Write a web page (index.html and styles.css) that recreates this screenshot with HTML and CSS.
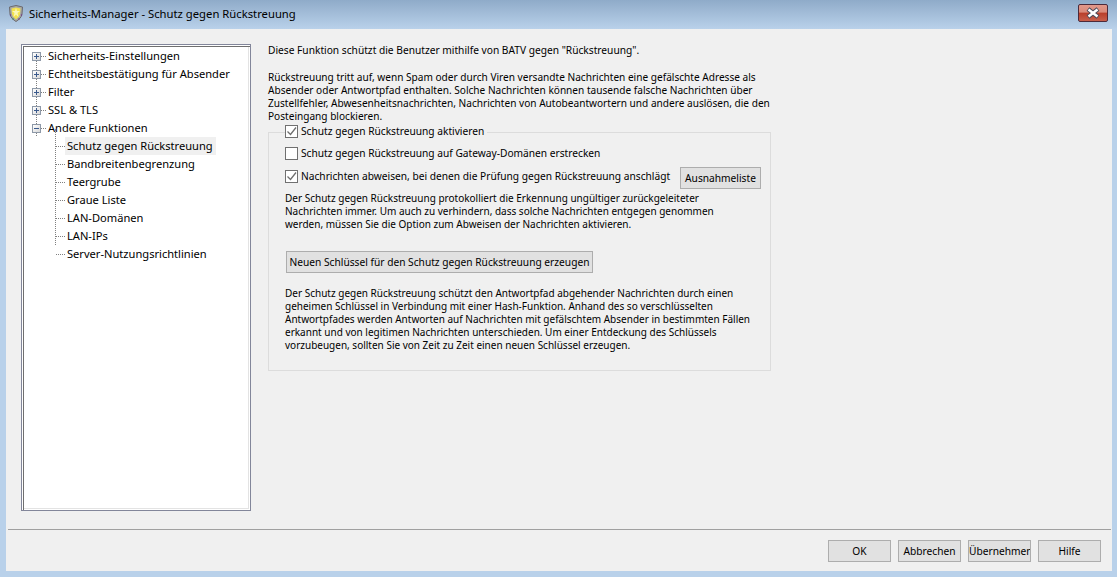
FILE: index.html
```html
<!DOCTYPE html>
<html lang="de">
<head>
<meta charset="utf-8">
<title>Sicherheits-Manager</title>
<link rel="stylesheet" href="styles.css">
</head>
<body>
<div class="window">
  <header class="titlebar">
    <svg class="shield" width="16" height="17" viewBox="0 0 16 17"><path d="M1.500 2 L8 .5 L14.500 2 L14 9 C13.500 12.500 10.500 15 8 16.500 C5.500 15 2.500 12.500 2 9 Z" fill="#a9a9a4" stroke="#6b6a6e"/><path d="M3.500 3.500 L8 2.500 L12.500 3.500 L12 9 C11.500 11.500 9.500 13 8 14.500 C6.500 13 4.500 11.500 4 9 Z" fill="#f3e24f"/><path d="M8 3 L9 6 L12 6 L9.500 8 L10.500 12 L8 9.500 L5.500 12 L6.500 8 L4 6 L7 6 Z" fill="#fbf7b8"/><circle cx="2.500" cy="10" r=".8" fill="#7b3f8c"/><circle cx="13.500" cy="10" r=".8" fill="#7b3f8c"/><circle cx="5" cy="14" r=".8" fill="#3f8c5a"/><circle cx="11" cy="14" r=".8" fill="#8c3f6a"/></svg>
    <span class="title">Sicherheits-Manager - Schutz gegen Rückstreuung</span>
    <button class="close" type="button" aria-label="Schließen"><svg width="16" height="12" viewBox="0 0 16 12"><path d="M3 2 L13 10 M13 2 L3 10" stroke="#4a4a5a" stroke-width="4.500"/><path d="M3.500 2.500 L12.500 9.500 M12.500 2.500 L3.500 9.500" stroke="#fff" stroke-width="2.500"/></svg></button>
  </header>
  <div class="client">
    <div class="main">
      <nav class="tree">
        <ul class="roots">
          <li class="row"><span class="exp plus"></span><span class="dash"></span><span class="label">Sicherheits-Einstellungen</span></li>
          <li class="row"><span class="exp plus"></span><span class="dash"></span><span class="label">Echtheitsbestätigung für Absender</span></li>
          <li class="row"><span class="exp plus"></span><span class="dash"></span><span class="label">Filter</span></li>
          <li class="row"><span class="exp plus"></span><span class="dash"></span><span class="label">SSL &amp; TLS</span></li>
          <li class="row"><span class="exp"></span><span class="dash"></span><span class="label">Andere Funktionen</span></li>
        </ul>
        <ul class="kids">
          <li class="row"><span class="dash"></span><span class="label sel">Schutz gegen Rückstreuung</span></li>
          <li class="row"><span class="dash"></span><span class="label">Bandbreitenbegrenzung</span></li>
          <li class="row"><span class="dash"></span><span class="label">Teergrube</span></li>
          <li class="row"><span class="dash"></span><span class="label">Graue Liste</span></li>
          <li class="row"><span class="dash"></span><span class="label">LAN-Domänen</span></li>
          <li class="row"><span class="dash"></span><span class="label">LAN-IPs</span></li>
          <li class="row"><span class="dash"></span><span class="label">Server-Nutzungsrichtlinien</span></li>
        </ul>
      </nav>
      <section class="content">
        <p class="intro">Diese Funktion schützt die Benutzer mithilfe von BATV gegen "Rückstreuung".</p>
        <p class="desc">Rückstreuung tritt auf, wenn Spam oder durch Viren versandte Nachrichten eine gefälschte Adresse als<br>Absender oder Antwortpfad enthalten. Solche Nachrichten können tausende falsche Nachrichten über<br>Zustellfehler, Abwesenheitsnachrichten, Nachrichten von Autobeantwortern und andere auslösen, die den<br>Posteingang blockieren.</p>
        <fieldset class="group">
          <legend class="legend"><label class="check"><span class="box"><svg width="11" height="11" viewBox="0 0 11 11"><path d="M1.500 5.500 L4.500 8.500 L10 1.500" fill="none" stroke="#6e6e6e" stroke-width="1.300"/></svg></span>Schutz gegen Rückstreuung aktivieren</label></legend>
          <label class="check second"><span class="box"></span>Schutz gegen Rückstreuung auf Gateway-Domänen erstrecken</label>
          <div class="reject">
            <label class="check"><span class="box"><svg width="11" height="11" viewBox="0 0 11 11"><path d="M1.500 5.500 L4.500 8.500 L10 1.500" fill="none" stroke="#6e6e6e" stroke-width="1.300"/></svg></span>Nachrichten abweisen, bei denen die Prüfung gegen Rückstreuung anschlägt</label>
            <button class="btn except" type="button">Ausnahmeliste</button>
          </div>
          <p class="note">Der Schutz gegen Rückstreuung protokolliert die Erkennung ungültiger zurückgeleiteter<br>Nachrichten immer. Um auch zu verhindern, dass solche Nachrichten entgegen genommen<br>werden, müssen Sie die Option zum Abweisen der Nachrichten aktivieren.</p>
          <button class="btn newkey" type="button">Neuen Schlüssel für den Schutz gegen Rückstreuung erzeugen</button>
          <p class="note last">Der Schutz gegen Rückstreuung schützt den Antwortpfad abgehender Nachrichten durch einen<br>geheimen Schlüssel in Verbindung mit einer Hash-Funktion. Anhand des so verschlüsselten<br>Antwortpfades werden Antworten auf Nachrichten mit gefälschtem Absender in bestimmten Fällen<br>erkannt und von legitimen Nachrichten unterschieden. Um einer Entdeckung des Schlüssels<br>vorzubeugen, sollten Sie von Zeit zu Zeit einen neuen Schlüssel erzeugen.</p>
        </fieldset>
      </section>
    </div>
    <footer class="footer">
      <button class="btn foot" type="button">OK</button>
      <button class="btn foot" type="button">Abbrechen</button>
      <button class="btn foot" type="button">Übernehmen</button>
      <button class="btn foot" type="button">Hilfe</button>
    </footer>
  </div>
</div>
</body>
</html>
```

FILE: styles.css
```css
* { box-sizing: border-box; }
html, body { margin: 0; height: 100%; overflow: hidden; }
body { font: 10.2px/13px "Noto Sans", "Liberation Sans", sans-serif; color: #000; background: #b9d1ea; }
ul { list-style: none; margin: 0; padding: 0; }
p { margin: 0; white-space: nowrap; }

.window { height: 577px; display: flex; flex-direction: column; padding: 0 5px 6px 6px; }

.titlebar {
  height: 29px; margin: 0 -5px 0 -6px; padding: 0 9px 3px 8px;
  display: flex; align-items: center; gap: 5px;
  background: linear-gradient(#8fabc9, #b9d1ea);
}
.shield { flex: none; }
.title { font: 11.27px "Noto Sans", sans-serif; flex: 1; }
.close {
  width: 30px; height: 18px; padding: 0; display: flex; align-items: center; justify-content: center;
  border: 1px solid #4d2a3a; border-radius: 2px;
  background: linear-gradient(#e3988a 0, #d98a7a 45%, #b93e2a 50%, #c75f4c 100%);
}

.client { flex: 1; min-height: 0; background: #f0f0f0; display: flex; flex-direction: column; }
.main { flex: 1; min-height: 0; display: flex; padding: 15px 0 0 15px; }

.tree {
  width: 230px; height: 467px; flex: none; padding: 2px 0 0 9px;
  background: #fff;
  font: 11.12px "Noto Sans", sans-serif;
  border: 1px solid #82869a;
  box-shadow: inset 1px 1px 0 #fff, inset 2px 2px 0 #6f6f6f, inset -1px -1px 0 #fff, inset -2px -2px 0 #e3e3e3;
}
.roots { position: relative; }
.roots::before { content: ""; position: absolute; left: 5px; top: 9px; height: 80px; border-left: 1px dotted #808080; }
.row { height: 18px; display: flex; align-items: center; position: relative; white-space: nowrap; }
.exp {
  width: 9px; height: 9px; flex: none; margin-left: 1px; position: relative;
  border: 1px solid #8e99a8; background: linear-gradient(135deg, #fff, #d8d8d8);
}
.exp::before { content: ""; position: absolute; left: 1px; right: 1px; top: 3px; height: 1px; background: #3b5a8c; }
.plus::after { content: ""; position: absolute; top: 1px; bottom: 1px; left: 3px; width: 1px; background: #3b5a8c; }
.dash { width: 5px; flex: none; border-top: 1px dotted #808080; margin-right: 1px; }
.label { padding: 0 2px 0 1px; line-height: 18px; height: 18px; }

.kids { position: relative; margin-left: 24px; }
.kids::before { content: ""; position: absolute; left: 0; top: -8px; height: 116px; border-left: 1px dotted #808080; }
.kids .dash { width: 9px; margin-right: 0; margin-left: 1px; }
.kids .label { padding: 0 3px 0 2px; }
.sel { background: #f0f0f0; }

.content { margin-left: 17px; width: 503px; flex: none; }
.intro { margin: 0 0 14px 0; }
.desc { margin: 0 0 2px 0; font-size: 10.1px; }

.group { margin: 0; padding: 0 9px 0 16px; border: 1px solid #dcdcdc; height: 246px; min-width: 0; }
.legend { padding: 0 3px 0 0; margin-left: 0; height: 14px; }
.check { display: inline-flex; align-items: center; gap: 3px; white-space: nowrap; }
.box {
  width: 13px; height: 13px; flex: none; display: flex; align-items: center; justify-content: center;
  border: 1px solid #707070; background: #fff;
}
.second { display: flex; margin-top: 8px; }
.reject { display: flex; align-items: center; justify-content: space-between; margin-top: 7px; }
.reject .check { margin-bottom: 3px; }
.note { margin-top: 3px; font-size: 10px; }
.note.last { margin-top: 14px; }
.btn { font: inherit; color: #000; background: #e1e1e1; border: 1px solid #adadad; padding: 0; height: 22px; white-space: nowrap; overflow: hidden; }
.except { width: 81px; flex: none; }
.newkey { display: block; width: 307px; margin: 20px 0 0 1px; }

.footer {
  height: 42px; flex: none; margin: 0 1px 0 2px; padding: 10px 10px 0 0;
  border-top: 1px solid #a0a0a0;
  display: flex; justify-content: flex-end; gap: 7px;
}
.foot { width: 63px; }
```
